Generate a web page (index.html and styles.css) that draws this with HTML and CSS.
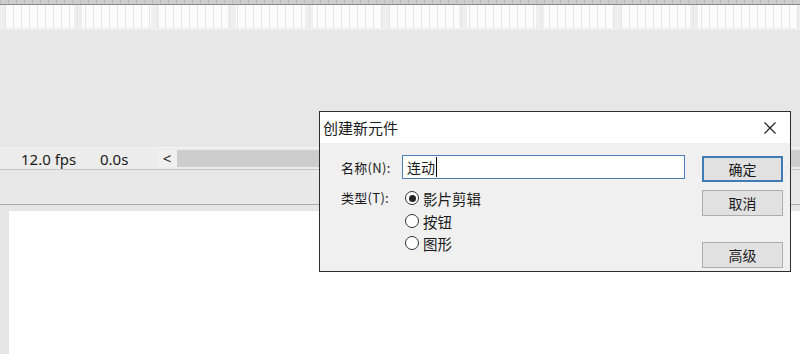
FILE: index.html
```html
<!DOCTYPE html>
<html>

<head>
    <title>创建新元件</title>
    <link rel="stylesheet" href="styles.css">
</head>

<body>
    <div class="app">
        <!-- Timeline -->
        <div class="ruler"></div>
        <div class="frames"></div>
        <div class="layers"></div>

        <div class="statusbar">
            <span class="fps">12.0 fps</span>
            <span class="time">0.0s</span>
            <span class="scroll-btn">&lt;</span>
            <div class="scroll-track"></div>
        </div>

        <div class="toolbar"></div>

        <div class="stage-wrap">
            <div class="stage"></div>
        </div>

        <!-- Dialog -->
        <div class="dialog">
            <div class="dialog-title">
                <span>创建新元件</span>
                <svg class="close" width="12" height="12" viewBox="0 0 12 12">
                    <path d="M0.5 0.5 L11.5 11.5 M11.5 0.5 L0.5 11.5" stroke="#1a1a1a" stroke-width="1.1" fill="none"/>
                </svg>
            </div>
            <div class="dialog-body">
                <div class="fields">
                    <div class="row">
                        <label class="label" for="symbolName">名称(N):</label>
                        <div class="input" id="symbolName"><span class="caret">连动</span></div>
                    </div>
                    <div class="row type-row">
                        <span class="label type-label">类型(T):</span>
                        <div class="radios">
                            <div class="radio-item first"><span class="radio checked"></span>影片剪辑</div>
                            <div class="radio-item"><span class="radio"></span>按钮</div>
                            <div class="radio-item"><span class="radio"></span>图形</div>
                        </div>
                    </div>
                </div>
                <div class="buttons">
                    <button class="btn btn-default">确定</button>
                    <button class="btn btn-cancel">取消</button>
                    <button class="btn btn-advanced">高级</button>
                </div>
            </div>
        </div>
    </div>
</body>

</html>
```

FILE: styles.css
```css
html, body {
    margin: 0;
    height: 100%;
}

body {
    font-family: "Noto Sans", "Noto Sans CJK SC", sans-serif;
    background-color: #e7e7e7;
    color: #1a1a1a;
    overflow: hidden;
}

.app {
    position: relative;
    width: 800px;
    height: 354px;
}

/* Timeline */
.ruler {
    height: 4px;
    background: repeating-linear-gradient(90deg, #bdbdbd 0 1px, #cdcdcd 1px 8px);
    border-bottom: 1px solid #8c8c8c;
}

.frames {
    height: 23px;
    background:
        repeating-linear-gradient(90deg, transparent 0 5px, #e4e4e4 5px 6px, transparent 6px 8px),
        repeating-linear-gradient(90deg, #fcfcfc 0 37px, #efefef 37px 45px, #fcfcfc 45px 77px);
    background-position: 0 0, -40px 0;
}

.layers {
    height: 119px;
    border-top: 2px solid #efefef;
    box-sizing: border-box;
}

.statusbar {
    height: 21px;
    display: flex;
    align-items: center;
    background-color: #ececec;
    border-top: 1px solid #f4f4f4;
    border-bottom: 1px solid #c6c6c6;
    font-size: 15px;
}

.fps {
    margin-left: 21px;
    width: 79px;
}

.time {
    width: 57px;
}

.scroll-btn {
    width: 20px;
    height: 17px;
    line-height: 17px;
    text-align: center;
    background-color: #f0f0f0;
    font-size: 15px;
}

.scroll-track {
    flex: 1;
    height: 17px;
    background-color: #cdcdcd;
}

.toolbar {
    height: 34px;
    background-color: #e8e8e8;
    border-bottom: 1px solid #a9a9a9;
}

.stage-wrap {
    height: 149px;
    padding: 6px 0 0 9px;
    box-sizing: border-box;
    background-color: #e6e6e6;
}

.stage {
    height: 100%;
    background-color: #fff;
}

/* Dialog */
.dialog {
    position: absolute;
    left: 319px;
    top: 111px;
    width: 470px;
    height: 159px;
    border: 1px solid #2e2e2e;
    background-color: #f0f0f0;
    font-family: "Noto Sans CJK SC", "Noto Sans", sans-serif;
}

.dialog-title {
    height: 31px;
    display: flex;
    align-items: center;
    justify-content: space-between;
    padding: 0 14px 0 3px;
    background-color: #fff;
    font-size: 15px;
}

.close {
    display: block;
    margin-top: 1px;
}

.dialog-body {
    display: flex;
    padding: 12px 7px 0 21px;
}

.fields {
    width: 344px;
    margin-right: 17px;
}

.row {
    display: flex;
    align-items: center;
}

.label {
    width: 61px;
    font-size: 13px;
    letter-spacing: 0.3px;
}

.input {
    width: 283px;
    height: 24px;
    box-sizing: border-box;
    border: 1px solid #4a80b6;
    background-color: #fff;
    padding-left: 4px;
    font-size: 14px;
    line-height: 22px;
}

.caret {
    border-right: 1px solid #000;
    padding-right: 1px;
}

.type-row {
    margin-top: 7px;
    align-items: flex-start;
}

.type-label {
    line-height: 24px;
}

.radios {
    padding-left: 3px;
}

.radio-item {
    display: flex;
    align-items: center;
    height: 22px;
    font-size: 14.5px;
}

.radio-item.first {
    height: 24px;
}

.radio {
    position: relative;
    width: 14px;
    height: 14px;
    box-sizing: border-box;
    border: 1px solid #333;
    border-radius: 50%;
    background-color: #fff;
    margin-right: 4px;
}

.radio.checked::after {
    content: "";
    position: absolute;
    left: 2.5px;
    top: 2.5px;
    width: 7px;
    height: 7px;
    border-radius: 50%;
    background-color: #222;
}

.buttons {
    display: flex;
    flex-direction: column;
    padding-top: 1px;
}

.btn {
    width: 81px;
    height: 26px;
    box-sizing: border-box;
    border: 1px solid #adadad;
    background-color: #e1e1e1;
    font-family: "Noto Sans CJK SC", sans-serif;
    font-size: 14px;
    color: #1a1a1a;
    padding: 0;
}

.btn-default {
    border: 2px solid #3f7bb4;
}

.btn-cancel {
    margin-top: 8px;
}

.btn-advanced {
    margin-top: 26px;
}
```
